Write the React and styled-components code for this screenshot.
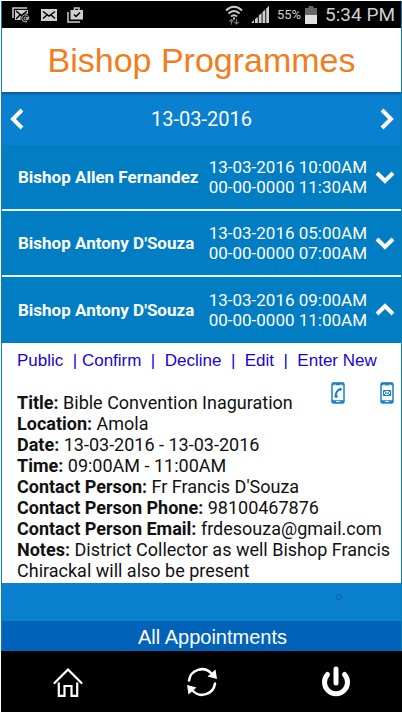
import React, { useState } from "react";
import styled, { createGlobalStyle } from "styled-components";

const GlobalStyle = createGlobalStyle`
  * {
    box-sizing: border-box;
  }
  body {
    margin: 0;
    background: #ffffff;
    font-family: Roboto, "Liberation Sans", sans-serif;
  }
  button {
    display: flex;
    padding: 0;
    border: 0;
    background: none;
    color: inherit;
    font: inherit;
    cursor: pointer;
  }
`;

//layout
const Screen = styled.div`
  display: flex;
  flex-direction: column;
  min-height: 100vh;
  padding-top: 1px;
`;

const Frame = styled.div`
  display: flex;
  flex-direction: column;
  flex: 1;
  margin-left: 1px;
  border: solid #0b7fae;
  border-width: 0 1px;
  background: #0a80cf;
`;

const StatusBar = styled.div`
  display: flex;
  align-items: center;
  justify-content: space-between;
  height: 27px;
  padding: 0 6px 0 10px;
  background: #000000;
  color: #cfcfcf;
`;

const StatusGroup = styled.div`
  display: flex;
  align-items: center;
  gap: ${(props) => props.$gap}px;
`;

const Percent = styled.span`
  font-size: 13px;
  line-height: 18px;
  margin-right: -4px;
`;

const Clock = styled.span`
  font-size: 19px;
  line-height: 24px;
`;

const Header = styled.header`
  padding: 12px 0;
  background: #ffffff;
  text-align: center;
`;

const Title = styled.h1`
  margin: 0;
  color: #f07d1e;
  font: 34px/40px "Liberation Sans", Arial, sans-serif;
`;

const DateBar = styled.div`
  display: flex;
  align-items: center;
  justify-content: space-between;
  height: 53px;
  padding: 0 6px;
  background: #0a80d0;
  box-shadow: inset 0 4px 3px -2px #075a94;
  color: #ffffff;
  font-size: 20px;
`;

const Row = styled.button`
  && {
    align-items: center;
    width: 100%;
    height: 66px;
    padding: 0 6px 0 16px;
    border-bottom: ${(props) => (props.$last ? 0 : 2)}px solid #e8f6fc;
    background: #007dc3;
    color: #ffffff;
    text-align: left;
  }
`;

const Name = styled.span`
  flex: 1;
  font-size: 17px;
  font-weight: 700;
`;

const Times = styled.span`
  margin-right: 8px;
  font-size: 17px;
  line-height: 20px;
  white-space: pre-line;
`;

const Panel = styled.section`
  padding: 8px 10px 2px 15px;
  background: #ffffff;
`;

const Actions = styled.nav`
  color: #1606d0;
  font: 17px/20px "Liberation Sans", Arial, sans-serif;
  white-space: pre;
  a {
    color: inherit;
    text-decoration: none;
  }
`;

const ContactIcons = styled.div`
  display: flex;
  justify-content: flex-end;
  gap: 35px;
  height: 22px;
  margin: 11px -3px -12px 0;
`;

const Details = styled.div`
  color: #111111;
  font-size: 18px;
  line-height: 21px;
  p {
    margin: 0;
  }
`;

const Space = styled.div`
  flex: 1;
  display: flex;
  align-items: center;
  justify-content: flex-end;
  padding: 0 59px 10px 0;
`;

const AllButton = styled.button`
  && {
    justify-content: center;
    padding: 5px 0 2px 22px;
    background: #0062b8;
    color: #ffffff;
    font: 20px/23px "Liberation Sans", Arial, sans-serif;
  }
`;

const NavBar = styled.nav`
  display: flex;
  align-items: center;
  justify-content: space-around;
  height: 61px;
  margin-left: 1px;
  background: #000000;
  color: #ffffff;
`;

//icons
const Chevron = ({ points, width, height }) => (
  <svg width={width} height={height} viewBox={`0 0 ${width} ${height}`}>
    <polyline points={points} fill="none" stroke="#fff" strokeWidth="4" />
  </svg>
);

const MailStackIcon = () => (
  <svg width="19" height="18" viewBox="0 0 19 18">
    <path d="M1 12V2h14" fill="none" stroke="#cfcfcf" strokeWidth="1.5" />
    <path d="M3 4h13v10H3z" fill="#cfcfcf" />
    <path d="M4 5l5.5 4.500L15 5M4 13l4-4M11 9l4 4" fill="none" stroke="#000" strokeWidth="1.500" />
    <circle cx="13.500" cy="12.500" r="5" fill="#000" />
    <circle cx="13.500" cy="12.500" r="1.500" fill="none" stroke="#cfcfcf" />
    <path d="M15 11v2.200q1.800 .8 1.800-1.200a3.500 3.500 0 1 0-1.500 3.200" fill="none" stroke="#cfcfcf" />
  </svg>
);

const MailIcon = () => (
  <svg width="16" height="12" viewBox="0 0 16 12">
    <path d="M0 0h16v12H0z" fill="#cfcfcf" />
    <path d="M2 2.500l6 4.500 6-4.500M2 9.500l4-3.500M10 6l4 3.500" fill="none" stroke="#000" strokeWidth="1.500" />
  </svg>
);

const TaskIcon = () => (
  <svg width="17" height="16" viewBox="0 0 17 16">
    <path d="M1 5v10h12" fill="none" stroke="#cfcfcf" strokeWidth="1.500" />
    <path d="M3.500 3H16v9.500H3.500z" fill="#cfcfcf" />
    <path d="M7.500 3V1h4.500v2" fill="none" stroke="#cfcfcf" strokeWidth="1.500" />
    <path d="M7 7.500l2 2 4-4" fill="none" stroke="#000" strokeWidth="1.500" />
  </svg>
);

const WifiIcon = () => (
  <svg width="18" height="20" viewBox="0 0 18 20" fill="none" stroke="#cfcfcf" strokeWidth="2">
    <path d="M1 5.500Q9-2 17 5.500M3.500 8.500q5.500-5 11 0M6 11.500q3-2.500 6 0" />
    <path d="M8 13.500h2" />
    <path d="M6.500 19.500v-5M4.500 16.500l2-2 2 2M11.500 14v5M9.500 17l2 2 2-2" stroke="#777" strokeWidth="1.200" />
  </svg>
);

const SignalIcon = () => (
  <svg width="18" height="17" viewBox="0 0 18 17" fill="#cfcfcf">
    <path d="M0 17l3-3v3zM4 13l2.800-2v6H4zM7.800 9.500L10.600 7v10H7.800zM11.500 6l2.800-2.500V17h-2.800zM15.200 2.500L18 0v17h-2.800z" />
  </svg>
);

const BatteryIcon = () => (
  <svg width="12" height="18" viewBox="0 0 12 18">
    <path d="M3.500 0h5v2H12v7H0V2h3.500z" fill="#666" />
    <path d="M0 9h12v9H0z" fill="#e0e0e0" />
  </svg>
);

const PhoneShape = ({ children }) => (
  <svg width="14" height="22" viewBox="0 0 14 22" fill="none" stroke="#1b7fc8">
    <rect x="1" y="1" width="12" height="20" rx="1.500" strokeWidth="1.500" />
    <path d="M1 2h12M1 19.500h12" strokeWidth="2.500" />
    <path d="M4 2v1M10 2v1M5 19.500h4" stroke="#cfe8f8" />
    {children}
  </svg>
);

const HomeIcon = () => (
  <svg width="30" height="30" viewBox="0 0 30 30" fill="none" stroke="#fff" strokeWidth="2.200">
    <path d="M1.500 16L15 2.500 28.500 16" strokeLinecap="round" />
    <path d="M5.800 15.500v13.300h5.700v-9.800h7v9.800h5.700V15.500" />
  </svg>
);

const RefreshIcon = () => (
  <svg width="32" height="30" viewBox="0 0 32 30" fill="none" stroke="#fff" strokeWidth="2.500">
    <path d="M3 13.500A13 13 0 0 1 25.500 6.500M29 16.500A13 13 0 0 1 6.500 23.500" strokeLinecap="round" />
    <path d="M29.500 2.500L31 12l-9.500-2.500zM2.500 27.500L1 18l9.500 2.500z" fill="#fff" stroke="none" />
  </svg>
);

const PowerIcon = () => (
  <svg width="30" height="31" viewBox="0 0 30 31" fill="none" stroke="#fff" strokeLinecap="round">
    <path d="M6.500 8.500a11.500 11.500 0 1 0 17 0" strokeWidth="5" />
    <path d="M15 3v14" strokeWidth="5" />
  </svg>
);

//data
const programmes = [
  { name: "Bishop Allen Fernandez", times: "13-03-2016 10:00AM\n00-00-0000 11:30AM" },
  { name: "Bishop Antony D'Souza", times: "13-03-2016 05:00AM\n00-00-0000 07:00AM" },
  { name: "Bishop Antony D'Souza", times: "13-03-2016 09:00AM\n00-00-0000 11:00AM" },
];

const details = [
  ["Title", "Bible Convention Inaguration"],
  ["Location", "Amola"],
  ["Date", "13-03-2016 - 13-03-2016"],
  ["Time", "09:00AM - 11:00AM"],
  ["Contact Person", "Fr Francis D'Souza"],
  ["Contact Person Phone", "98100467876"],
  ["Contact Person Email", "frdesouza@gmail.com"],
  ["Notes", "District Collector as well Bishop Francis Chirackal will also be present"],
];

const ProgrammeDetails = () => (
  <Panel>
    <Actions>
      <a href="#public">Public</a>
      {"  | "}
      <a href="#confirm">Confirm</a>
      {"  |  "}
      <a href="#decline">Decline</a>
      {"  |  "}
      <a href="#edit">Edit</a>
      {"  |  "}
      <a href="#new">Enter New</a>
    </Actions>
    <ContactIcons>
      <button aria-label="Call">
        <PhoneShape>
          <path d="M4.500 15.500Q4 9 10 6.500M4.500 15.500l2-2M9 8.500l1.500-2" strokeWidth="2" />
        </PhoneShape>
      </button>
      <button aria-label="Message">
        <PhoneShape>
          <path d="M3.500 8.500h7v5h-7zM3.500 8.500L7 11.500l3.500-3M3.500 13.500l2.500-2.500M10.500 13.500L8 11" />
        </PhoneShape>
      </button>
    </ContactIcons>
    <Details>
      {details.map(([label, value]) => (
        <p key={label}>
          <b>{label}:</b> {value}
        </p>
      ))}
    </Details>
  </Panel>
);

const App = () => {
  const [open, setOpen] = useState(2);

  return (
    <Screen>
      <GlobalStyle />
      <Frame>
        <StatusBar>
          <StatusGroup $gap={10}>
            <MailStackIcon />
            <MailIcon />
            <TaskIcon />
          </StatusGroup>
          <StatusGroup $gap={8}>
            <WifiIcon />
            <SignalIcon />
            <Percent>55%</Percent>
            <BatteryIcon />
            <Clock>5:34 PM</Clock>
          </StatusGroup>
        </StatusBar>
        <Header>
          <Title>Bishop Programmes</Title>
        </Header>
        <DateBar>
          <button aria-label="Previous day">
            <Chevron width={16} height={22} points="14,2 5,11 14,20" />
          </button>
          <span>13-03-2016</span>
          <button aria-label="Next day">
            <Chevron width={16} height={22} points="3,2 12,11 3,20" />
          </button>
        </DateBar>
        {programmes.map((item, i) => (
          <React.Fragment key={i}>
            <Row
              $last={i === programmes.length - 1}
              aria-expanded={open === i}
              onClick={() => setOpen(open === i ? -1 : i)}
            >
              <Name>{item.name}</Name>
              <Times>{item.times}</Times>
              <Chevron
                width={20}
                height={14}
                points={open === i ? "2,11 10,3 18,11" : "2,3 10,11 18,3"}
              />
            </Row>
            {open === i && <ProgrammeDetails />}
          </React.Fragment>
        ))}
        <Space>
          <svg width="6" height="6" viewBox="0 0 6 6" fill="none" stroke="#0a5f9c">
            <circle cx="3" cy="3" r="2.500" />
          </svg>
        </Space>
        <AllButton>All Appointments</AllButton>
      </Frame>
      <NavBar>
        <button aria-label="Home">
          <HomeIcon />
        </button>
        <button aria-label="Refresh">
          <RefreshIcon />
        </button>
        <button aria-label="Exit">
          <PowerIcon />
        </button>
      </NavBar>
    </Screen>
  );
};

export default App;
